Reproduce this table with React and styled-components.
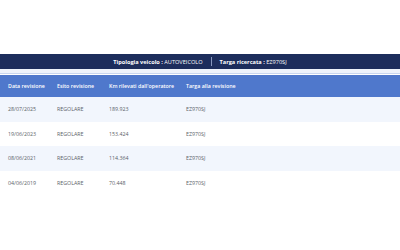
import React from "react";
import styled, { createGlobalStyle } from "styled-components";

const GlobalStyle = createGlobalStyle`
  html, body {
    margin: 0;
    padding: 0;
    background: #ffffff;
  }
  body {
    font-family: "Open Sans", "Liberation Sans", sans-serif;
  }
`;

const Page = styled.div`
  width: 400px;
  height: 250px;
  padding-top: 54px;
  box-sizing: border-box;
  background: #ffffff;
`;

const InfoBar = styled.div`
  height: 15px;
  background: #1d2d5c;
  display: flex;
  align-items: center;
  justify-content: center;
  gap: 8px;
  color: #ffffff;
  font-size: 5.6px;
`;

const InfoItem = styled.span`
  white-space: nowrap;
`;

const InfoLabel = styled.b`
  font-weight: 700;
`;

const Divider = styled.span`
  width: 1px;
  height: 9px;
  background: #8796bd;
`;

const Spacer = styled.div`
  height: 4px;
  background: #eef3fb;
  border-bottom: 1px solid #c9d6ef;
  margin-bottom: 1px;
`;

const Row = styled.div`
  display: grid;
  grid-template-columns: 49px 52px 77px 1fr;
  align-items: center;
  height: ${(p) => (p.head ? "22px" : "24.5px")};
  background: ${(p) => (p.head ? "#4f78cc" : p.alt ? "#f2f6fd" : "#ffffff")};
`;

const Cell = styled.div`
  padding-left: 8px;
  white-space: nowrap;
  font-size: 5.3px;
  color: ${(p) => (p.head ? "#ffffff" : "#5a5f69")};
  font-weight: ${(p) => (p.head ? 600 : 400)};
`;

const rows = [
  ["28/07/2025", "REGOLARE", "189.923", "EZ970SJ"],
  ["19/06/2023", "REGOLARE", "153.424", "EZ970SJ"],
  ["08/06/2021", "REGOLARE", "114.364", "EZ970SJ"],
  ["04/06/2019", "REGOLARE", "70.448", "EZ970SJ"],
];

const headers = [
  "Data revisione",
  "Esito revisione",
  "Km rilevati dall'operatore",
  "Targa alla revisione",
];

export default function App() {
  return (
    <Page>
      <GlobalStyle />
      <InfoBar>
        <InfoItem>
          <InfoLabel>Tipologia veicolo :</InfoLabel> AUTOVEICOLO
        </InfoItem>
        <Divider />
        <InfoItem>
          <InfoLabel>Targa ricercata :</InfoLabel> EZ970SJ
        </InfoItem>
      </InfoBar>
      <Spacer />
      <Row head>
        {headers.map((h) => (
          <Cell head key={h}>{h}</Cell>
        ))}
      </Row>
      {rows.map((r, i) => (
        <Row key={r[0]} alt={i % 2 === 0}>
          {r.map((c, j) => (
            <Cell key={j}>{c}</Cell>
          ))}
        </Row>
      ))}
    </Page>
  );
}
